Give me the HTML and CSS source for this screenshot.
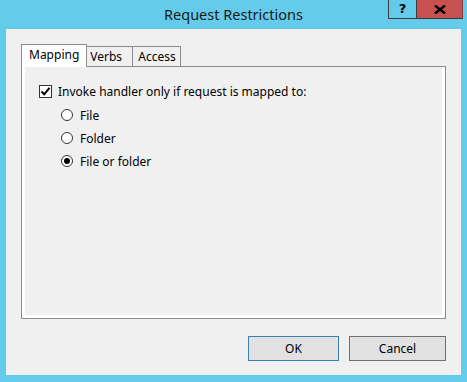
FILE: index.html
```html
<!DOCTYPE html>
<html lang="en">
<head>
    <meta charset="UTF-8">
    <meta name="viewport" content="width=device-width, initial-scale=1.0">
    <title>Request Restrictions</title>
    <link rel="stylesheet" href="styles.css">
</head>
<body>
    <div class="window">
        <div class="titlebar">
            <span class="title">Request Restrictions</span>
            <div class="captionBtns">
                <div class="helpBtn">?</div>
                <div class="closeBtn">
                    <svg width="12" height="9" viewBox="0 0 12 9"><path d="M1 0.5 L11 8.5 M11 0.5 L1 8.5" stroke="#000" stroke-width="2.4"/></svg>
                </div>
            </div>
        </div>
        <div class="client">
            <div class="tabs">
                <div class="tab active">Mapping</div>
                <div class="tab verbs">Verbs</div>
                <div class="tab access">Access</div>
            </div>
            <div class="panel">
                <div class="checkRow">
                    <span class="checkbox">
                        <svg width="11" height="11" viewBox="0 0 11 11"><path d="M1.5 5.5 L4.2 8.3 L9.5 1.8" stroke="#000" stroke-width="2" fill="none"/></svg>
                    </span>
                    <span>Invoke handler only if request is mapped to:</span>
                </div>
                <div class="radios">
                    <div class="radioRow"><span class="radio"></span><span>File</span></div>
                    <div class="radioRow"><span class="radio"></span><span>Folder</span></div>
                    <div class="radioRow"><span class="radio checked"></span><span>File or folder</span></div>
                </div>
            </div>
            <div class="buttons">
                <button class="btn okBtn">OK</button>
                <button class="btn cancelBtn">Cancel</button>
            </div>
        </div>
    </div>
</body>
</html>
```

FILE: styles.css
```css
body{
    margin: 0;
    background-color: #65cbea;
    font-family: "Noto Sans", "Open Sans", sans-serif;
    font-size: 12px;
    color: #000;
}
.window{
    width: 467px;
    height: 382px;
    display: flex;
    flex-direction: column;
}
.titlebar{
    position: relative;
    height: 29px;
    display: flex;
    justify-content: center;
    align-items: center;
}
.title{
    font-size: 14.5px;
    color: #1a1a1a;
    margin-top: -1px;
}
.captionBtns{
    position: absolute;
    top: 0;
    left: 388px;
    display: flex;
}
.helpBtn{
    width: 27px;
    height: 18px;
    border: 1px solid #3a3a3a;
    border-top: none;
    font-weight: bold;
    font-size: 13px;
    line-height: 18px;
    text-align: center;
    font-family: "DejaVu Sans", sans-serif;
}
.closeBtn{
    width: 45px;
    height: 18px;
    background-color: #c75050;
    border-bottom: 1px solid #3a3a3a;
    border-right: 1px solid #8a3a3a;
    display: flex;
    justify-content: center;
    align-items: center;
}
.client{
    margin: 0 6px;
    height: 346px;
    background-color: #f0f0f0;
    padding: 15px 0 0 15px;
    box-sizing: border-box;
}
.tabs{
    display: flex;
    align-items: flex-end;
    height: 22px;
}
.tab{
    height: 20px;
    box-sizing: border-box;
    border: 1px solid #898c95;
    border-bottom: none;
    border-left: none;
    background-color: #f0f0f0;
    padding: 0 0 0 3px;
    line-height: 19px;
}
.tab.verbs{
    width: 46px;
}
.tab.access{
    width: 48px;
    padding-left: 5px;
}
.tab.active{
    height: 23px;
    border-left: 1px solid #898c95;
    background-color: #fff;
    padding: 0 7px;
    margin-bottom: -1px;
    position: relative;
    z-index: 1;
    line-height: 19px;
}
.panel{
    width: 425px;
    height: 253px;
    box-sizing: border-box;
    border: 1px solid #898c95;
    box-shadow: inset 3px -3px 0 #fff, inset -3px 0 0 #fff;
    padding: 17px 0 0 17px;
}
.checkRow{
    display: flex;
    align-items: center;
    gap: 6px;
    height: 14px;
}
.checkbox{
    width: 13px;
    height: 13px;
    box-sizing: border-box;
    border: 1px solid #333;
    background-color: #fff;
    display: flex;
    justify-content: center;
    align-items: center;
}
.radios{
    padding: 11px 0 0 22px;
    display: flex;
    flex-direction: column;
    gap: 11px;
}
.radioRow{
    display: flex;
    align-items: center;
    gap: 7px;
    height: 12px;
}
.radio{
    width: 12px;
    height: 12px;
    box-sizing: border-box;
    border: 1px solid #333;
    border-radius: 50%;
    background-color: #fff;
    display: flex;
    justify-content: center;
    align-items: center;
}
.radio.checked::after{
    content: "";
    width: 6px;
    height: 6px;
    border-radius: 50%;
    background-color: #000;
}
.buttons{
    display: flex;
    gap: 10px;
    padding: 17px 0 0 227px;
}
.btn{
    height: 25px;
    background-color: #e1e1e1;
    border: 1px solid #707070;
    font-family: "Noto Sans", "Open Sans", sans-serif;
    font-size: 12px;
    padding: 0;
    color: #000;
}
.okBtn{
    width: 91px;
    border-color: #3c7fb1;
}
.cancelBtn{
    width: 97px;
}
```
